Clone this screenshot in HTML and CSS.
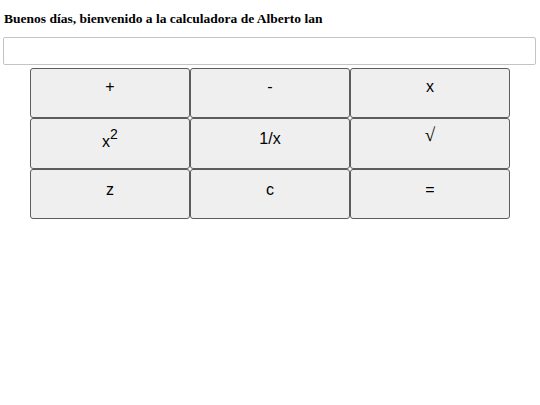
FILE: index.html
```html
<!DOCTYPE html>
<html lang="es">
<head>
<meta charset="utf-8">
<title>Calculadora</title>
<link rel="stylesheet" href="styles.css">
</head>
<body>
<h4 class="title">Buenos días, bienvenido a la calculadora de Alberto lan</h4>
<input class="display" type="text">
<div class="pad">
  <button class="key"><span class="lbl">+</span></button>
  <button class="key"><span class="lbl">-</span></button>
  <button class="key"><span class="lbl">x</span></button>
  <button class="key key-pow"><span class="lbl">x<sup>2</sup></span></button>
  <button class="key key-mid"><span class="lbl">1/x</span></button>
  <button class="key key-sqrt"><span class="lbl sqrt">√</span></button>
  <button class="key key-low"><span class="lbl">z</span></button>
  <button class="key key-low"><span class="lbl">c</span></button>
  <button class="key key-low"><span class="lbl">=</span></button>
</div>
</body>
</html>
```
FILE: styles.css
```css
html, body {
  margin: 0;
  padding: 0;
  background: #fff;
}
body {
  font-family: "Liberation Serif", serif;
  padding: 11px 3px 0 4px;
}
.title {
  margin: 0 0 11px 0;
  font-size: 13.5px;
  font-weight: bold;
  line-height: 15px;
  color: #000;
}
.display {
  display: block;
  box-sizing: border-box;
  width: 533px;
  height: 28px;
  margin: 0 0 3px -1px;
  border: 1px solid #c4c4c4;
  border-radius: 2px;
  padding: 0;
  background: #fff;
}
.pad {
  display: grid;
  grid-template-columns: repeat(3, 160px);
  grid-auto-rows: 50.4px;
  margin-left: 26px;
}
.key {
  box-sizing: border-box;
  margin: 0;
  height: 100%;
  border: 1px solid #5c5c5c;
  border-radius: 3px;
  background: #efefef;
  font-family: "Liberation Sans", Arial, sans-serif;
  font-size: 16px;
  color: #000;
  display: flex;
  justify-content: center;
  align-items: flex-start;
  padding: 9px 0 0 0;
  line-height: normal;
}
.key-mid {
  padding-top: 11px;
}
.key-pow {
  padding-top: 7px;
}
.key-sqrt {
  padding-top: 5px;
}
.key-low {
  padding-top: 11px;
}
.lbl {
  display: block;
  line-height: normal;
}
.lbl sup {
  font-size: 14px;
  vertical-align: 8px;
  line-height: normal;
}
.sqrt {
  font-family: "Liberation Serif", serif;
  font-size: 19px;
}
```
